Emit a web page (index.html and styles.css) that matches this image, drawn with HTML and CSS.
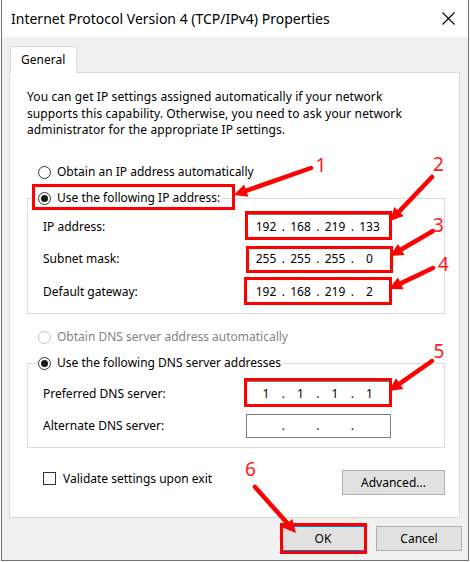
FILE: index.html
```html
<!DOCTYPE html>
<html lang="en">
<head>
<meta charset="utf-8">
<title>Internet Protocol Version 4 (TCP/IPv4) Properties</title>
<link rel="stylesheet" href="styles.css">
</head>
<body>
<div class="screen">
  <div class="window">
    <div class="titlebar">
      <span class="title">Internet Protocol Version 4 (TCP/IPv4) Properties</span>
      <svg class="close" width="13" height="13" viewBox="0 0 13 13"><path d="M0.5 0.5 L12.5 12.5 M12.5 0.5 L0.5 12.5" stroke="#000" stroke-width="1.1" fill="none"/></svg>
    </div>
    <div class="content">
      <div class="tabs"><div class="tab">General</div></div>
      <div class="panel">
        <p class="desc">You can get IP settings assigned automatically if your network<br>supports this capability. Otherwise, you need to ask your network<br>administrator for the appropriate IP settings.</p>

        <div class="radio-row first"><span class="radio"></span><span>Obtain an IP address automatically</span></div>
        <fieldset class="group group-ip">
          <legend class="radio-row"><span class="radio checked"></span><span>Use the following IP address:</span></legend>
          <div class="field-row"><span class="field-label">IP address:</span>
            <div class="ip"><span>192</span><i>.</i><span>168</span><i>.</i><span>219</span><i>.</i><span>133</span></div></div>
          <div class="field-row"><span class="field-label">Subnet mask:</span>
            <div class="ip"><span>255</span><i>.</i><span>255</span><i>.</i><span>255</span><i>.</i><span>0</span></div></div>
          <div class="field-row"><span class="field-label">Default gateway:</span>
            <div class="ip"><span>192</span><i>.</i><span>168</span><i>.</i><span>219</span><i>.</i><span>2</span></div></div>
        </fieldset>

        <div class="radio-row disabled second"><span class="radio"></span><span>Obtain DNS server address automatically</span></div>
        <fieldset class="group group-dns">
          <legend class="radio-row"><span class="radio checked"></span><span>Use the following DNS server addresses</span></legend>
          <div class="field-row"><span class="field-label">Preferred DNS server:</span>
            <div class="ip"><span>1</span><i>.</i><span>1</span><i>.</i><span>1</span><i>.</i><span>1</span></div></div>
          <div class="field-row"><span class="field-label">Alternate DNS server:</span>
            <div class="ip"><span></span><i>.</i><span></span><i>.</i><span></span><i>.</i><span></span></div></div>
        </fieldset>

        <div class="bottom-row">
          <div class="check-row"><span class="checkbox"></span><span>Validate settings upon exit</span></div>
          <button class="btn btn-adv">Advanced...</button>
        </div>
      </div>
      <div class="footer">
        <button class="btn btn-ok">OK</button>
        <button class="btn">Cancel</button>
      </div>
    </div>
  </div>

  <svg class="annot" width="470" height="562" viewBox="0 0 470 562">
    <g fill="none" stroke="#ff0000" stroke-width="3">
      <rect x="33.5" y="185.5" width="200" height="23"/>
      <rect x="246.5" y="212.5" width="144" height="26"/>
      <rect x="247.5" y="247.5" width="144" height="24"/>
      <rect x="245.5" y="278.5" width="145" height="25"/>
      <rect x="245.5" y="379.5" width="145" height="26"/>
      <rect x="281.5" y="524.5" width="84" height="28"/>
    </g>
    <g stroke="#ff0000" stroke-width="4.5" stroke-linecap="round">
      <line x1="311" y1="168" x2="246.3" y2="190.7"/>
      <line x1="432" y1="177" x2="399" y2="211.6"/>
      <line x1="433" y1="231" x2="401.2" y2="249.5"/>
      <line x1="433" y1="268" x2="400.7" y2="283.4"/>
      <line x1="432" y1="361" x2="399.7" y2="383.6"/>
      <line x1="255" y1="487" x2="287.4" y2="523.3"/>
    </g>
    <g fill="#ff0000">
      <polygon points="234,195 244.1,184.6 248.4,196.8"/>
      <polygon points="390,221 394.3,207.1 403.7,216.1"/>
      <polygon points="390,256 398,243.9 404.5,255.1"/>
      <polygon points="389,289 397.9,277.5 403.5,289.3"/>
      <polygon points="389,391 395.9,378.2 403.4,388.9"/>
      <polygon points="296,533 282.5,527.6 292.2,519"/>
    </g>
    <g class="num" fill="#ff1a1a" text-anchor="middle">
      <text x="321" y="172">1</text>
      <text x="438.5" y="171">2</text>
      <text x="438.5" y="232">3</text>
      <text x="443.5" y="271">4</text>
      <text x="439" y="358">5</text>
      <text x="250.5" y="476">6</text>
    </g>
  </svg>
</div>
</body>
</html>
```

FILE: styles.css
```css
* { box-sizing: border-box; }
html, body { margin: 0; padding: 0; background: #ffffff; }
body {
  font-family: "Noto Sans", "Open Sans", sans-serif;
  font-size: 12px;
  color: #000;
}
.screen { position: relative; width: 470px; height: 562px; overflow: hidden; }
.window {
  margin-left: 1px;
  width: 468px;
  height: 561px;
  border: 1px solid #707070;
  border-top: none;
  background: #f0f0f0;
  display: flex;
  flex-direction: column;
}
.titlebar {
  height: 37px;
  flex: none;
  background: #fff;
  display: flex;
  align-items: center;
  justify-content: space-between;
  padding: 0 13px 0 9px;
}
.title { font-size: 14px; white-space: nowrap; }
.close { display: block; }
.content {
  flex: 1;
  padding: 9px 6px 0 7px;
  display: flex;
  flex-direction: column;
}
.tabs { display: flex; padding-left: 1px; }
.tab {
  position: relative;
  z-index: 1;
  width: 67px;
  height: 27px;
  margin-bottom: -1px;
  padding-left: 10px;
  border: 1px solid #d9d9d9;
  border-bottom: none;
  background: #fff;
  line-height: 25px;
}
.panel {
  margin-right: 2px;
  background: #fff;
  border: 1px solid #d9d9d9;
  padding: 16px 14px 22px 17px;
  display: flex;
  flex-direction: column;
}
.desc { margin: 0; line-height: 16.5px; white-space: nowrap; letter-spacing: 0.1px; }
.radio-row {
  display: flex;
  align-items: center;
  gap: 6px;
  height: 16px;
  line-height: 16px;
  padding-left: 11px;
  white-space: nowrap;
}
.radio-row.first { margin-top: 25.5px; }
.radio-row.second { margin-top: 15px; }
.radio {
  width: 13px;
  height: 13px;
  border: 1px solid #333;
  border-radius: 50%;
  background: #fff;
  display: flex;
  align-items: center;
  justify-content: center;
  flex: none;
}
.radio.checked::after {
  content: "";
  width: 7px;
  height: 7px;
  border-radius: 50%;
  background: #1a1a1a;
}
.disabled { color: #838383; }
.disabled .radio { border-color: #c4c4c4; }
.group {
  margin: 10px 0 0 0;
  min-width: 0;
  border: 1px solid #dcdcdc;
  padding: 8px 0 10px 10px;
  display: flex;
  flex-direction: column;
  gap: 8.5px;
}
.group legend.radio-row { padding: 0; background: #fff; padding-right: 1px; }
.group-dns { padding-top: 10px; padding-bottom: 9.5px; }
.field-row {
  display: flex;
  align-items: center;
  height: 24px;
  padding-left: 5px;
}
.field-label { width: 203px; flex: none; }
.ip {
  width: 145px;
  height: 24px;
  border: 1px solid #7a7a7a;
  background: #fff;
  display: grid;
  grid-template-columns: 27px 7.5px 27px 7.5px 27px 7.5px 27px;
  align-items: center;
  padding-left: 5.5px;
}
.ip span, .ip i { text-align: center; font-style: normal; }
.bottom-row {
  margin-top: 22px;
  display: flex;
  justify-content: space-between;
  align-items: flex-start;
}
.check-row {
  display: flex;
  align-items: center;
  gap: 7px;
  height: 16px;
  margin-left: 16px;
}
.checkbox {
  width: 13px;
  height: 13px;
  border: 1px solid #333;
  background: #fff;
  flex: none;
}
.btn {
  font-family: inherit;
  font-size: 12px;
  color: #000;
  background: #e1e1e1;
  border: 1px solid #adadad;
  height: 25px;
  width: 86px;
  padding: 0;
  margin: 0;
}
.btn-adv { width: 103px; }
.btn-ok { border: 1px solid #0078d7; }
.footer {
  margin-top: 8px;
  display: flex;
  justify-content: flex-end;
  gap: 10px;
}
.annot { position: absolute; top: 0; left: 0; pointer-events: none; }
.num text { font-family: "Noto Sans", "Liberation Sans", sans-serif; font-size: 19px; }
```
